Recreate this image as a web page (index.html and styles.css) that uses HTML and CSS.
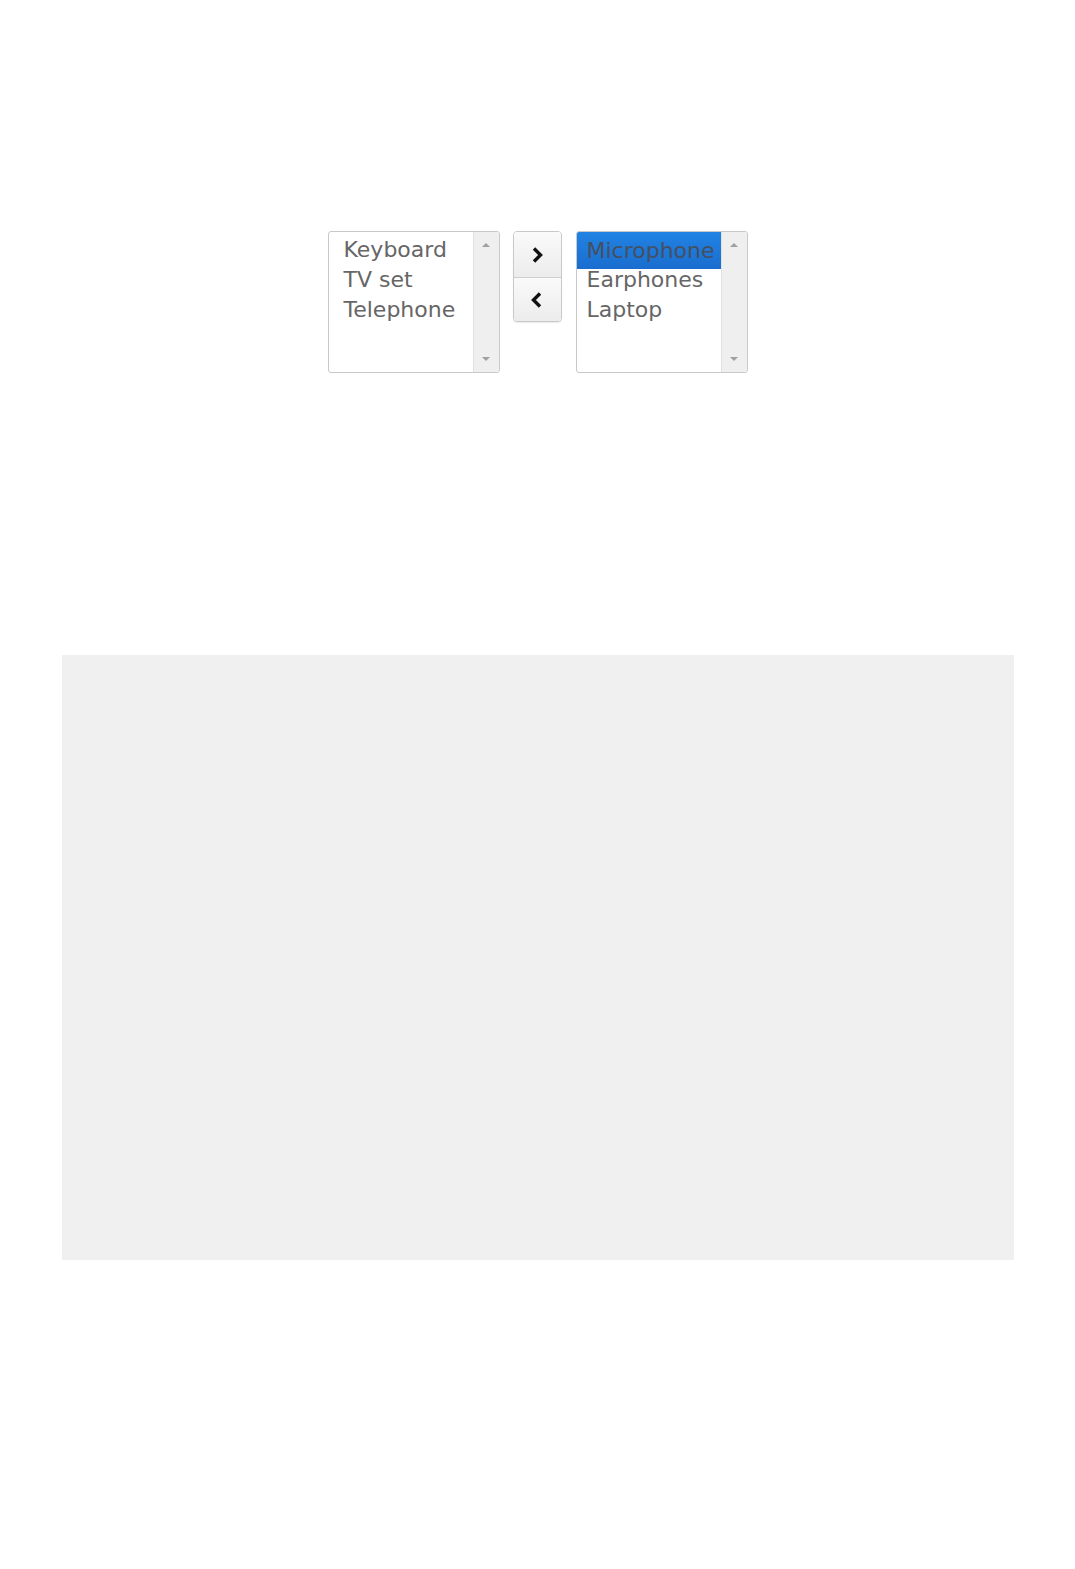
FILE: index.html
```html
<!DOCTYPE html>
<html lang="en">
<head>
    <meta charset="UTF-8">
    <title>List Box</title>
    <link rel="stylesheet" href="styles.css">
</head>
<body>

<div class="picker">
    <!-- lista origen -->
    <div class="listbox">
        <ul class="items left">
            <li>Keyboard</li>
            <li>TV set</li>
            <li>Telephone</li>
        </ul>
        <div class="scrollbar">
            <span class="arrow up"></span>
            <span class="arrow down"></span>
        </div>
    </div>

    <div class="tools">
        <button class="tool">
            <svg width="16" height="20" viewBox="0 0 16 20"><path d="M5 3.5 L11.5 10 L5 16.5" fill="none" stroke="#111" stroke-width="3.4"/></svg>
        </button>
        <button class="tool">
            <svg width="16" height="20" viewBox="0 0 16 20"><path d="M11 3.5 L4.5 10 L11 16.5" fill="none" stroke="#111" stroke-width="3.4"/></svg>
        </button>
    </div>

    <!-- lista destino -->
    <div class="listbox">
        <ul class="items right">
            <li class="selected">Microphone</li>
            <li>Earphones</li>
            <li>Laptop</li>
        </ul>
        <div class="scrollbar">
            <span class="arrow up"></span>
            <span class="arrow down"></span>
        </div>
    </div>
</div>

<div class="panel"></div>

</body>
</html>
```

FILE: styles.css
```css
body {
    margin: 0;
    font-family: "DejaVu Sans", sans-serif;
    background: #fff;
}
.picker {
    display: flex;
    justify-content: center;
    align-items: flex-start;
    padding-top: 231px;
}
.listbox {
    width: 172px;
    height: 142px;
    box-sizing: border-box;
    border: 1px solid #c9c9c9;
    border-radius: 3px;
    display: flex;
    overflow: hidden;
}
.items {
    flex: 1;
    list-style: none;
    margin: 0;
    padding: 3px 0 0 0;
    font-size: 22px;
    color: #666;
}
.items li {
    line-height: 30px;
    height: 30px;
}
.items.left li {
    padding-left: 15px;
}
.items.right li {
    padding-left: 10px;
}
.items li.selected {
    margin: -3px 0 -4px 0;
    padding-top: 4px;
    height: 33px;
    background: linear-gradient(#2183e3, #1a6dcf);
    color: #44505f;
}
.scrollbar {
    width: 25px;
    background: #efefef;
    border-left: 1px solid #e0e0e0;
    position: relative;
}
.arrow {
    position: absolute;
    left: 8px;
    width: 0;
    height: 0;
    border-left: 4px solid transparent;
    border-right: 4px solid transparent;
}
.arrow.up {
    top: 11px;
    border-bottom: 4px solid #a0a0a0;
}
.arrow.down {
    bottom: 11px;
    border-top: 4px solid #a0a0a0;
}
.tools {
    margin: 0 14px 0 13px;
    width: 49px;
    border: 1px solid #c9c9c9;
    border-radius: 4px;
    box-sizing: border-box;
    overflow: hidden;
    box-shadow: 0 1px 1px rgba(0, 0, 0, 0.08);
}
.tool {
    display: flex;
    align-items: center;
    justify-content: center;
    width: 100%;
    height: 45px;
    padding: 0;
    border: none;
    background: linear-gradient(#fafafa, #ececec);
    cursor: pointer;
}
.tool + .tool {
    border-top: 1px solid #cfcfcf;
    height: 44px;
}
.panel {
    width: 952px;
    height: 605px;
    margin: 282px auto 0;
    background: #f0f0f0;
}
```
